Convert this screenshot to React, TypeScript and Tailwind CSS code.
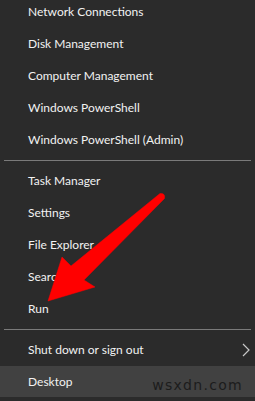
import React from 'react'

const groupA = [
  'Network Connections',
  'Disk Management',
  'Computer Management',
  'Windows PowerShell',
  'Windows PowerShell (Admin)',
]

const groupB = ['Task Manager', 'Settings', 'File Explorer', 'Search', 'Run']

function Item({ label }: { label: string }) {
  return (
    <div className="h-[32px] flex items-center pl-[28px] text-[12px] text-[#f2f2f2]">
      {label}
    </div>
  )
}

function Divider() {
  return <div className="mx-[4px] my-[4px] h-px bg-[#7a7a7a]" />
}

export default function App() {
  return (
    <div
      className="relative w-[255px] h-[401px] overflow-hidden bg-[#2b2b2b]"
      style={{ fontFamily: 'Lato, "Noto Sans", sans-serif' }}
    >
      <div className="mt-[-4px]">
        {groupA.map((l) => (
          <Item key={l} label={l} />
        ))}
        <Divider />
        {groupB.map((l) => (
          <Item key={l} label={l} />
        ))}
        <Divider />
        <div className="h-[32px] flex items-center justify-between pl-[28px] pr-[5px] text-[12px] text-[#f2f2f2]">
          <span>Shut down or sign out</span>
          <svg width="8" height="14" viewBox="0 0 8 14" fill="none">
            <path d="M1 1 L7 7 L1 13" stroke="#c8c8c8" strokeWidth="1.2" />
          </svg>
        </div>
        <div className="h-[31px] flex items-center justify-between pl-[28px] pr-[12px] bg-[#414141] text-[12px] text-[#f2f2f2]">
          <span>Desktop</span>
          <span
            className="mt-[8px] text-[14px] tracking-[1.3px] text-[#1c1c1c]"
            style={{ fontFamily: '"DejaVu Sans", sans-serif' }}
          >
            wsxdn.com
          </span>
        </div>
      </div>

      {/* red annotation arrow */}
      <svg
        className="absolute left-0 top-0 pointer-events-none"
        width="255"
        height="401"
        viewBox="0 0 255 401"
      >
        <path
          d="M160 193.5 Q165.5 193 164.5 198.5 L84 280 L95 287 L48 301 L62 257 L71 266 Z"
          fill="#ff0000"
          stroke="#ff0000"
          strokeWidth="0.5"
          strokeLinejoin="round"
        />
      </svg>
    </div>
  )
}
